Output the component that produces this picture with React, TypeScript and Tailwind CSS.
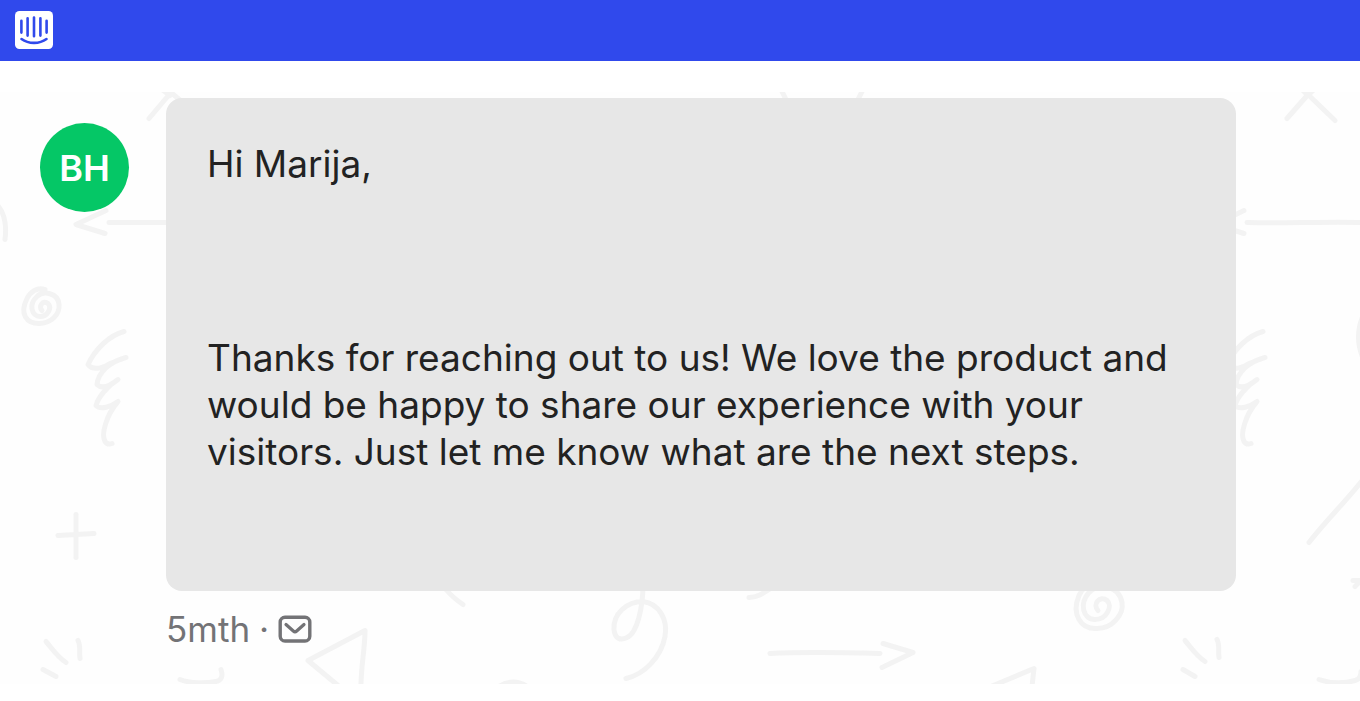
const message = {
  initials: 'BH',
  greeting: 'Hi Marija,',
  body: 'Thanks for reaching out to us! We love the product and would be happy to share our experience with your visitors. Just let me know what are the next steps.',
  age: '5mth',
};

function IntercomLogo() {
  return (
    <svg viewBox="0 0 38 38" className="size-[38px]" role="img" aria-label="Intercom">
      <rect width="38" height="38" rx="4.5" fill="#fff" />
      <g fill="none" stroke="#3049ec" strokeWidth="2.6" strokeLinecap="round">
        <path d="M6.4 9.8v11.8M12.6 7.2v17.400M19 6.5v18.800M25.4 7.2v17.400M31.6 9.8v11.8" />
        <path d="M6.500 28c7 5.2 18 5.2 25 0" />
      </g>
    </svg>
  );
}

function MailIcon() {
  return (
    <svg viewBox="0 0 34 28" className="h-7 w-[34px]" fill="none" stroke="#737376" strokeLinecap="round" strokeLinejoin="round" role="img" aria-label="Email">
      <rect x="2.2" y="2.2" width="29.6" height="23.8" rx="4.8" strokeWidth="3.4" />
      <path d="M8 9.500l7.300 6.500c1.100 1 2.300 1 3.400 0l7.300-6.500" strokeWidth="3.2" />
    </svg>
  );
}

function Doodles() {
  return (
    <svg
      viewBox="0 92 1360 593"
      preserveAspectRatio="xMidYMid slice"
      className="absolute inset-0 h-full w-full"
      fill="none"
      stroke="#f3f3f3"
      strokeWidth="5"
      strokeLinecap="round"
      strokeLinejoin="round"
      aria-hidden="true"
    >
      {/* Chevrons along the top edge */}
      <path d="M149 119 171 93l12 10M162 90l8 6" />
      <path d="M1287 119 1308 95l27 26M1302 90l6 6 6-6" />
      <path d="M781 90l6 12M863 90l-6 12" />

      {/* Left arrows */}
      <path d="M109 223h62M106 211 76 225l29 9" />
      <path d="M1247 223c38 1 76-1 116 0M1244 211l-29 14 29 9" />
      <path d="M-4 204c8 8 11 20 9 36" />

      {/* Spirals */}
      <path d="M45 290c-8-3-15 3-18 9-8 16 0 25 12 25 12 0 21-9 20-19-1-12-16-14-22-8-9 8-5 20 3 20 8 0 12-9 8-13-5-4-10 3-6 7" />
      <path d="M1107 586c-13-5-23-1-28 10-8 19 2 34 18 33 16 0 27-15 25-26-3-17-24-20-33-10-10 11-6 27 6 27 12 0 18-14 12-19-7-6-15 4-9 10" />

      {/* Scribbles */}
      <path d="M124 332c-15 4-29 18-36 33 5 7 17 3 22-1l16-6c-16 4-28 15-29 27 6 6 16-1 21-5-11 7-20 18-22 26 5 5 15 1 22-4-12 14-17 33-13 40 2 3 4 3 7 2" />
      <path d="M1263 332c-15 4-29 18-36 33 5 7 17 3 22-1l16-6c-16 4-28 15-29 27 6 6 16-1 21-5-11 7-20 18-22 26 5 5 15 1 22-4-12 14-17 33-13 40 2 3 4 3 7 2" />

      <path d="M76 515v43M58 536l36-2" />
      <path d="M1363 480c-18 23-38 42-54 63M1364 314c-7 15-7 32 0 47" />

      {/* Bottom strip */}
      <path d="M46 642c6 7 12 16 20 21M78 641c3 5 1 12 2 18M43 670l13 7" />
      <path d="M1185 641c6 7 12 16 20 21M1217 640c3 5 1 12 2 18M1183 670l12 7" />
      <path d="M338 686 308 661c19-10 36-19 57-30 0 19-4 34-4 56" />
      <path d="M991 687 1034 669l-2 18" />
      <path d="M180 680c10 4 26 4 36 2 6-1 7-6 5-12M1319 680c12 4 26 4 36 1 4-1 6-4 6-9M1353 581h8l-6 6" />
      <path d="M446 590c5 6 11 11 17 15M749 598c8 0 14-4 20-8M499 687c8-6 20-6 28 0" />
      <path d="M643 585c0 23-6 49-16 53-6 3-12 2-13-8-1-16 13-28 29-28 16 2 25 18 22 35-4 21-21 38-39 42" />
      <path d="M770 654c37-2 74-1 110 0M883 644l30 9-31 15" />
    </svg>
  );
}

export default function App() {
  return (
    <div className="min-h-screen bg-white font-['Inter','Liberation_Sans',sans-serif]">
      <header className="bg-[#3049ec] px-[15px] pt-[11px] pb-3">
        <IntercomLogo />
      </header>

      <main className="relative mt-[31px] bg-[#fefefe] pt-1.5 pr-[124px] pb-8 pl-10">
        <Doodles />
        <article className="relative flex items-start gap-[37px]">
          <div className="mt-[25px] flex size-[89px] shrink-0 items-center justify-center rounded-full bg-[#05c766] text-4xl font-semibold text-white">
            {message.initials}
          </div>
          <div className="min-w-0 flex-1">
            <div className="rounded-2xl bg-[#e7e7e7] px-[41px] pt-[42px] pb-[116px] text-[37px] leading-[47px] text-[#222]">
              <p>{message.greeting}</p>
              <p className="mt-[147px]">{message.body}</p>
            </div>
            <footer className="mt-[15px] flex items-center gap-[9px] text-[35px] leading-[46px] text-[#737376]">
              <time>{message.age}</time>
              <span>·</span>
              <MailIcon />
            </footer>
          </div>
        </article>
      </main>
    </div>
  );
}
